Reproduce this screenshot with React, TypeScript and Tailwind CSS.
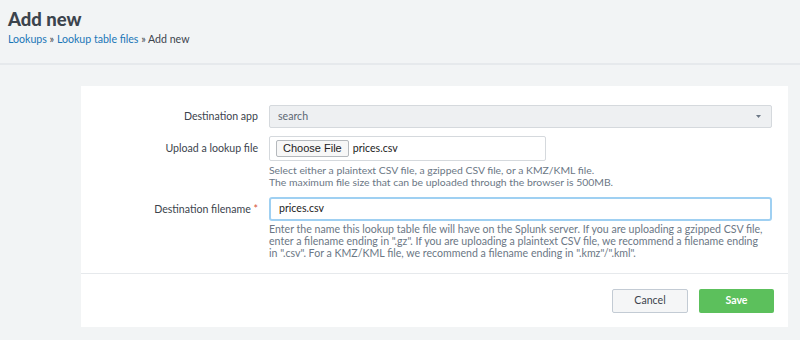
export default function App(): JSX.Element {
  return (
    <div className="h-[340px] w-[800px] overflow-hidden bg-[#f2f4f5] text-[#3c444d] [font-family:Lato,Liberation_Sans,sans-serif]">
      <div className="h-[65px] border-b-2 border-[#e6e9ec] px-[8px] pt-[7px]">
        <h1 className="text-[18.5px] font-black leading-[24px] text-[#3c444d]">Add new</h1>
        <div className="mt-[1px] text-[10.6px] leading-[14px]">
          <a className="text-[#1a76b7]">Lookups</a>
          <span className="text-[#3c444d]"> » </span>
          <a className="text-[#1a76b7]">Lookup table files</a>
          <span className="text-[#3c444d]"> » Add new</span>
        </div>
      </div>

      <div className="ml-[81px] mt-[21px] w-[707px] bg-white">
        <div className="pb-[14px] pt-[19px]">
          <div className="flex items-center">
            <label className="w-[188px] pr-[11px] text-right text-[10.6px]">Destination app</label>
            <div className="flex h-[23px] w-[503px] items-center justify-between rounded-[2px] border border-[#d5d9dd] bg-[#eef0f2] pl-[8px] pr-[10px] text-[10.6px] text-[#5c6773]">
              <span>search</span>
              <svg width="5" height="3" viewBox="0 0 5 3">
                <path d="M0 0h5L2.5 3z" fill="#6b7785" />
              </svg>
            </div>
          </div>

          <div className="mt-[8px] flex">
            <label className="w-[188px] pr-[11px] text-right text-[10.6px] leading-[25px]">Upload a lookup file</label>
            <div>
              <div className="flex h-[25px] w-[277px] items-center rounded-[2px] border border-[#d5d9dd] pl-[6px]">
                <span className="flex h-[17px] items-center rounded-[2px] border border-[#b5b9bd] bg-[#f7f7f7] px-[6px] text-[11px] text-[#222] [font-family:Liberation_Sans,sans-serif]">
                  Choose File
                </span>
                <span className="ml-[4px] text-[10.6px] text-[#222]">prices.csv</span>
              </div>
              <p className="mt-[3px] whitespace-nowrap text-[10.4px] leading-[12px] text-[#6b7785]">
                Select either a plaintext CSV file, a gzipped CSV file, or a KMZ/KML file.
                <br />
                The maximum file size that can be uploaded through the browser is 500MB.
              </p>
            </div>
          </div>

          <div className="mt-[9px] flex">
            <label className="w-[188px] pr-[11px] text-right text-[10.6px] leading-[24px]">
              Destination filename <span className="text-[#d6563c]">*</span>
            </label>
            <div>
              <div className="flex h-[24px] w-[503px] items-center rounded-[3px] border-2 border-[#9fd0f2] pl-[8px] text-[10.6px] text-[#222]">
                prices.csv
              </div>
              <p className="mt-[2px] whitespace-nowrap text-[10.6px] leading-[12px] text-[#6b7785]">
                Enter the name this lookup table file will have on the Splunk server. If you are uploading a gzipped CSV file,
                <br />
                enter a filename ending in ".gz". If you are uploading a plaintext CSV file, we recommend a filename ending
                <br />
                in ".csv". For a KMZ/KML file, we recommend a filename ending in ".kmz"/".kml".
              </p>
            </div>
          </div>
        </div>

        <div className="flex justify-end gap-[11px] border-t border-[#e6e9ec] pb-[14px] pr-[14px] pt-[15px]">
          <button className="h-[24px] w-[76px] rounded-[2px] border border-[#c3cbd4] bg-[#f5f6f7] text-[10.6px] text-[#3c444d]">
            Cancel
          </button>
          <button className="h-[24px] w-[75px] rounded-[2px] bg-[#5cc05c] text-[10.6px] font-bold text-white">Save</button>
        </div>
      </div>
    </div>
  )
}
